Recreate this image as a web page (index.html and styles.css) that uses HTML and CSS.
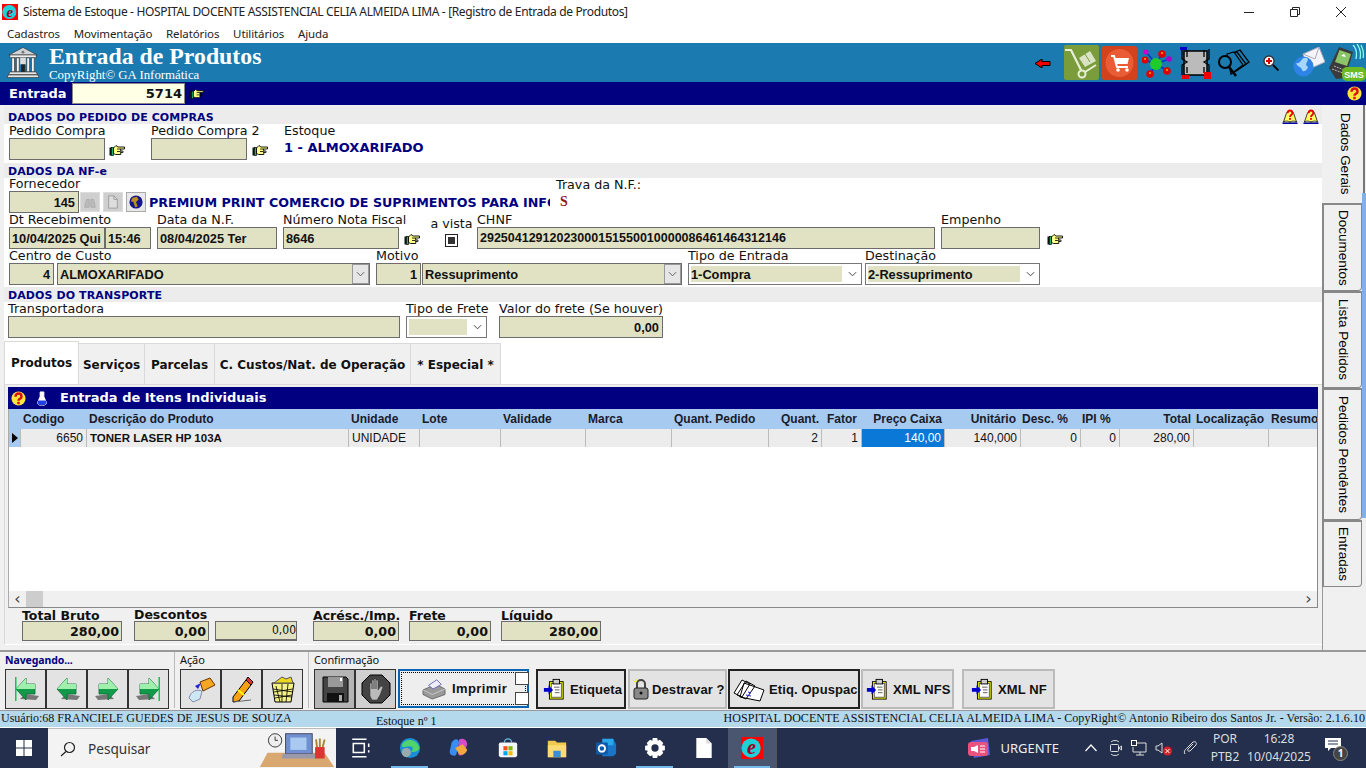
FILE: index.html
```html
<!DOCTYPE html>
<html lang="pt-BR">
<head>
<meta charset="utf-8">
<title>Sistema de Estoque</title>
<link rel="stylesheet" href="styles.css">
</head>
<body>
<svg class="defs" width="0" height="0" aria-hidden="true">
<defs>
<symbol id="hand" viewBox="0 0 16 12"><rect x=".5" y="3.500" width="2" height="8" fill="#111"/><rect x="2.500" y="3.500" width="2" height="8" fill="#19b56a" stroke="#000" stroke-width=".7"/><path d="M4.500 4L7 1.500l2 1.500h6.500v2H11l.8 1v4.500H6.500L4.500 9.500z" fill="#ffff8c" stroke="#000" stroke-width=".9"/><path d="M8 5h3M11.500 7H14v1.500h-2.500M8 7.500h3" fill="none" stroke="#000" stroke-width=".8"/></symbol>
<symbol id="help" viewBox="0 0 16 16"><circle cx="8" cy="8" r="7.500" fill="#ffe63a"/><path d="M4.800 6c0-4.500 6.400-4.500 6.400 0 0 2.300-3.200 2.300-3.200 4.300" fill="none" stroke="#d8101a" stroke-width="2.600"/><rect x="6.700" y="11.500" width="2.600" height="2.600" fill="#d8101a"/></symbol>
<symbol id="book" viewBox="0 0 16 16"><path d="M1 14L4 5c1-4 7-4 8 0l3 9z" fill="#ff6" stroke="#000" stroke-width=".8"/><path d="M1 14c3-2 5-1 7 0 2-1 4-2 7 0" fill="#fff" stroke="#000" stroke-width=".8"/><rect x="0" y="14.500" width="16" height="1.500" fill="#00a"/><path d="M5.500 4.500c0-4 5-4 5 0 0 2-2.500 2-2.500 4" fill="none" stroke="#e00" stroke-width="2"/><rect x="7" y="9.500" width="2" height="2" fill="#e00"/></symbol>
<symbol id="clip" viewBox="0 0 24 24"><rect x="7" y="4" width="15" height="19" fill="#ff0" stroke="#000"/><rect x="9" y="6" width="11" height="15" fill="#fff" stroke="#555"/><rect x="11" y="1.500" width="7" height="5" fill="#ccc" stroke="#000"/><path d="M12 10h6M13 13h5M13 16h5" stroke="#555"/><path d="M1 11h5V8l5 5-5 5v-3H1z" fill="#00c"/></symbol>
<symbol id="app" viewBox="0 0 24 24"><rect width="24" height="24" fill="#f00"/><circle cx="11" cy="12" r="10.500" fill="#1fd0d8"/><text x="11.500" y="19" text-anchor="middle" class="logo-e">e</text></symbol>
<symbol id="arrowl" viewBox="0 0 30 30"><path d="M9 25l16 1 3-4-14-2z" fill="#777"/><path d="M5 15L15 4v6h9v10h-9v6z" fill="#13994a" stroke="#086b33" stroke-width=".8"/><path d="M5 15L15 4v6h9v5z" fill="#9ff0ac"/></symbol>
</defs>
</svg>

<header class="titlebar">
  <svg class="title-icon"><use href="#app"/></svg>
  <span class="title-text">Sistema de Estoque - HOSPITAL DOCENTE ASSISTENCIAL CELIA ALMEIDA LIMA - [Registro de Entrada de Produtos]</span>
  <div class="win-btns">
    <svg class="win" viewBox="0 0 12 12"><path d="M1 6.500h10" stroke="#222"/></svg>
    <svg class="win" viewBox="0 0 12 12"><path d="M1.500 3.500h7v7h-7zM3.500 3V1.500h7v7H9" fill="none" stroke="#222"/></svg>
    <svg class="win" viewBox="0 0 12 12"><path d="M1 1l10 10M11 1L1 11" stroke="#222"/></svg>
  </div>
</header>
<nav class="menubar"><span>Cadastros</span><span>Movimentação</span><span>Relatórios</span><span>Utilitários</span><span>Ajuda</span></nav>

<section class="banner">
  <svg class="bank" viewBox="0 0 34 34"><path d="M17 1L2 9h30z" fill="#cfd3d6" stroke="#333" stroke-width=".7"/><circle cx="17" cy="6" r="1.500" fill="#777"/><rect x="3" y="9" width="28" height="3" fill="#eee" stroke="#333" stroke-width=".7"/><path d="M5 12h3v15H5zM10 12h3v15h-3zM21 12h3v15h-3zM26 12h3v15h-3z" fill="#f4f4f4" stroke="#333" stroke-width=".7"/><path d="M14 12h6v7h-6z" fill="#ddd"/><rect x="15" y="19" width="4" height="8" fill="#222"/><path d="M3 27h28l1.500 3H1.500zM1.500 30h31l1.500 3H0z" fill="#e6e6e6" stroke="#333" stroke-width=".7"/></svg>
  <div class="banner-title">
    <div class="big">Entrada de Produtos</div>
    <div class="small">CopyRight© GA Informática</div>
  </div>
  <div class="banner-tools">
    <svg class="t-arrow" viewBox="0 0 16 9"><path d="M0 4.500L7 0v2.500h8v4H7V9z" fill="#e00" stroke="#000"/></svg>
    <svg class="t-box t-green" viewBox="0 0 35 35"><rect width="35" height="35" rx="2" fill="#7a9c3a"/><path d="M1 5h6l10 20" fill="none" stroke="#e8efd8" stroke-width="2.200"/><circle cx="18" cy="29" r="3.500" fill="none" stroke="#e8efd8" stroke-width="2"/><path d="M21 27l11-7" stroke="#e8efd8" stroke-width="2"/><path d="M15 13l11-7 6 10-11 6z" fill="#d9e3c4"/><path d="M21 9l5 8" stroke="#7a9c3a"/></svg>
    <svg class="t-box t-orange" viewBox="0 0 35 34"><rect width="35" height="34" rx="2" fill="#d2431d"/><circle cx="17.500" cy="17" r="14" fill="#ea5c35"/><path d="M9 10h3l3 11h11" fill="none" stroke="#fff" stroke-width="2"/><path d="M13 12h14l-1.500 6H14.500z" fill="#fff"/><circle cx="16" cy="24" r="1.800" fill="#fff"/><circle cx="25" cy="24" r="1.800" fill="#fff"/></svg>
    <svg class="t-mol" viewBox="0 0 30 29"><path d="M4 3l10 12M20 5l-6 10M27 10l-13 5M3 11l11 4M26 22l-12-7M8 25l6-10" stroke="#03c" stroke-width="1.500"/><circle cx="14" cy="15" r="6" fill="#1fcc2c"/><circle cx="4" cy="3" r="2.500" fill="#c0c"/><circle cx="20" cy="5" r="3.800" fill="#d00"/><circle cx="3" cy="11" r="3.500" fill="#d00"/><circle cx="27" cy="10" r="2.800" fill="#a0c"/><circle cx="25" cy="22" r="3.800" fill="#d00"/><circle cx="8" cy="25" r="3.800" fill="#d00"/><path d="M19 4h2M2 10h2M24 21h2M7 24h2" stroke="#ff0"/></svg>
    <svg class="t-frame" viewBox="0 0 32 32"><rect x="5" y="4" width="23" height="24" fill="#bbb" stroke="#000" stroke-width="1.500"/><path d="M3 2v10l5 3-5 3v10M8 3v7M30 2v10l-5 3 5 3v10M25 3v7M8 20v6M25 20v6" fill="none" stroke="#000" stroke-width="1.300"/><rect x="1" y="0" width="7" height="3" fill="#00c"/><rect x="3" y="28" width="7" height="4" fill="#e00"/><rect x="25" y="25" width="7" height="7" fill="#e00"/></svg>
    <svg class="t-pages" viewBox="0 0 32 28"><path d="M15 4L22 1l9 12-13 9z" fill="none" stroke="#000" stroke-width="1.300"/><path d="M12 5l7-2 9 12-13 9z" fill="#1b7aaf" stroke="#000" stroke-width="1.300"/><path d="M9 5l7-2 9 13-12 9z" fill="#1b7aaf" stroke="#000" stroke-width="1.300"/><circle cx="7" cy="13" r="6" fill="#1b7aaf" stroke="#000" stroke-width="2"/><path d="M11 18l7 9" stroke="#000" stroke-width="2.500"/></svg>
    <svg class="t-zoom" viewBox="0 0 16 16"><circle cx="6" cy="6" r="5" fill="#fff" stroke="#333" stroke-width="1.300"/><path d="M3 6h6M6 3v6" stroke="#d00" stroke-width="2"/><path d="M10 10l5.500 5.500" stroke="#000" stroke-width="1.800"/></svg>
    <svg class="t-mail" viewBox="0 0 32 30"><path d="M10 7L26 0l6 15-18 8z" fill="#f2f4fa" stroke="#aab"/><path d="M10 7l12 5 4-12" fill="none" stroke="#aab"/><circle cx="10.500" cy="19.500" r="10" fill="#2d83e6"/><path d="M3 16c5 2 5-7 11-5 3 2-3 6 0 8 3 1-3 8-5 4-1-4-4-2-6-7z" fill="#a6d6fb"/></svg>
    <svg class="t-sms" viewBox="0 0 38 37"><path d="M1 24L11 3l14 5-8 26-9 1z" fill="#3b3b3b"/><path d="M11.500 6L23 10l-4 12-12-4z" fill="#8cc46a"/><path d="M13 12l3-2 2 3z" fill="#fff"/><path d="M4 25l11 4M6 22l10 4" stroke="#bbb" stroke-dasharray="2 1"/><path d="M25 1c3 3 4 9 3 14M29 0c3 4 4 10 3 15M33 1c2 4 3 9 2 13" fill="none" stroke="#8fe" stroke-width="1.300"/><rect x="14" y="23" width="24" height="14" rx="5" fill="#6cbb22"/><text x="26" y="33.500" text-anchor="middle" class="sms-t">SMS</text></svg>
  </div>
</section>
<section class="entry-bar">
  <span class="entry-label">Entrada</span>
  <span class="entry-box">5714</span>
  <svg class="hand"><use href="#hand"/></svg>
  <svg class="help-r"><use href="#help"/></svg>
</section>

<main class="workspace">
  <div class="form">
    <div class="sec-head sh1">DADOS DO PEDIDO DE COMPRAS
      <span class="books"><svg><use href="#book"/></svg><svg><use href="#book"/></svg></span>
    </div>
    <div class="row row-pedido">
      <div class="fld w96"><label>Pedido Compra</label><div class="inp"></div></div>
      <svg class="hand hand-f hp1"><use href="#hand"/></svg>
      <div class="fld w96 ml26"><label>Pedido Compra 2</label><div class="inp"></div></div>
      <svg class="hand hand-f hp2"><use href="#hand"/></svg>
      <div class="fld ml16"><label>Estoque</label><div class="estoque">1 - ALMOXARIFADO</div></div>
    </div>

    <div class="sec-head">DADOS DA NF-e</div>
    <div class="row row-forn">
      <div class="fld w70"><label>Fornecedor</label><div class="inp num">145</div></div>
      <div class="mini-tools">
        <span class="mini"><svg viewBox="0 0 16 14"><path d="M2 13l2-9h3v9zM9 13V4h3l2 9z" fill="#bbb" stroke="#aaa"/></svg></span>
        <span class="mini"><svg viewBox="0 0 12 16"><path d="M1 1h6l4 4v10H1z" fill="#ddd" stroke="#999"/><path d="M7 1v4h4" fill="none" stroke="#999"/></svg></span>
        <span class="mini mini-on"><svg viewBox="0 0 16 16"><circle cx="8" cy="8" r="7.500" fill="#14148c"/><path d="M4 3l5-1 2 3-3 3 2 5-3 1-2-6-3-1z" fill="#b8901a"/></svg></span>
      </div>
      <div class="supplier">PREMIUM PRINT COMERCIO DE SUPRIMENTOS PARA INFO</div>
      <div class="trava"><label>Trava da N.F.:</label><b>S</b></div>
    </div>
    <div class="row row-dates">
      <div class="fld"><label>Dt Recebimento</label><div class="pair"><div class="inp w96">10/04/2025 Qui</div><div class="inp w46">15:46</div></div></div>
      <div class="fld w120 ml6"><label>Data da N.F.</label><div class="inp">08/04/2025 Ter</div></div>
      <div class="fld w116 ml6"><label>Número Nota Fiscal</label><div class="inp">8646</div></div>
      <svg class="hand hand-f hd"><use href="#hand"/></svg>
      <div class="fld vista"><label>a vista</label><span class="check"></span></div>
      <div class="fld w458 ml4"><label>CHNF</label><div class="inp chnf">29250412912023000151550010000086461464312146</div></div>
      <div class="fld w99 ml6"><label>Empenho</label><div class="inp"></div></div>
      <svg class="hand hand-f he"><use href="#hand"/></svg>
    </div>
    <div class="row row-custo">
      <div class="fld w45"><label>Centro de Custo</label><div class="inp num">4</div></div>
      <div class="fld w313 ml3"><label>&nbsp;</label><div class="inp combo">ALMOXARIFADO<span class="drop"><svg viewBox="0 0 10 6"><path d="M1 1l4 4 4-4" fill="none" stroke="#555"/></svg></span></div></div>
      <div class="fld w45 ml6"><label>Motivo</label><div class="inp num">1</div></div>
      <div class="fld w260 ml1"><label>&nbsp;</label><div class="inp combo">Ressuprimento<span class="drop"><svg viewBox="0 0 10 6"><path d="M1 1l4 4 4-4" fill="none" stroke="#555"/></svg></span></div></div>
      <div class="fld w174 ml6"><label>Tipo de Entrada</label><div class="sel"><span>1-Compra</span><svg viewBox="0 0 10 6"><path d="M1 1l4 4 4-4" fill="none" stroke="#333"/></svg></div></div>
      <div class="fld w175 ml3"><label>Destinação</label><div class="sel"><span>2-Ressuprimento</span><svg viewBox="0 0 10 6"><path d="M1 1l4 4 4-4" fill="none" stroke="#333"/></svg></div></div>
    </div>

    <div class="sec-head">DADOS DO TRANSPORTE</div>
    <div class="row row-transp">
      <div class="fld w392"><label>Transportadora</label><div class="inp"></div></div>
      <div class="fld w81 ml6"><label>Tipo de Frete</label><div class="sel"><span></span><svg viewBox="0 0 10 6"><path d="M1 1l4 4 4-4" fill="none" stroke="#333"/></svg></div></div>
      <div class="fld w164 ml12"><label>Valor do frete (Se houver)</label><div class="inp num">0,00</div></div>
    </div>

    <div class="tabs">
      <span class="tab active">Produtos</span><span class="tab t2">Serviços</span><span class="tab t3">Parcelas</span><span class="tab t4">C. Custos/Nat. de Operação</span><span class="tab t5">* Especial *</span>
    </div>
    <div class="panel">
      <div class="grid-title">
        <svg class="gh"><use href="#help"/></svg>
        <svg class="flask" viewBox="0 0 12 16"><path d="M4 1h4v5l3 7-2 2H3l-2-2 3-7z" fill="#fff" stroke="#fff"/><path d="M2 10h8l1 3-2 2H3l-2-2z" fill="#2340e0"/></svg>
        <span>Entrada de Itens Individuais</span>
      </div>
      <div class="grid">
        <div class="g-row g-head">
          <span class="c ind"></span><span class="c c1">Codigo</span><span class="c c2">Descrição do Produto</span><span class="c c3">Unidade</span><span class="c c4">Lote</span><span class="c c5">Validade</span><span class="c c6">Marca</span><span class="c c7">Quant. Pedido</span><span class="c c8 r">Quant.</span><span class="c c9 r">Fator</span><span class="c c10 r">Preço Caixa</span><span class="c c11 r">Unitário</span><span class="c c12">Desc. %</span><span class="c c13">IPI %</span><span class="c c14 r">Total</span><span class="c c15">Localização</span><span class="c c16">Resumo</span>
        </div>
        <div class="g-row g-body">
          <span class="c ind"><i class="tri"></i></span><span class="c c1 r">6650</span><span class="c c2 b">TONER LASER HP 103A</span><span class="c c3">UNIDADE</span><span class="c c4"></span><span class="c c5"></span><span class="c c6"></span><span class="c c7"></span><span class="c c8 r">2</span><span class="c c9 r">1</span><span class="c c10 r sel-cell">140,00</span><span class="c c11 r">140,000</span><span class="c c12 r">0</span><span class="c c13 r">0</span><span class="c c14 r">280,00</span><span class="c c15"></span><span class="c c16"></span>
        </div>
        <div class="g-empty"></div>
        <div class="hscroll">
          <span class="arr">‹</span><span class="thumb"></span><span class="track"></span><span class="arr">›</span>
        </div>
      </div>
      <div class="totals">
        <div class="tot w100"><label>Total Bruto</label><div class="inp tinp">280,00</div></div>
        <div class="tot w75 ml12"><label class="up">Descontos</label><div class="inp tinp">0,00</div></div>
        <div class="tot w82 ml6"><label>&nbsp;</label><div class="inp tinp thin">0,00</div></div>
        <div class="tot w86 ml16"><label>Acrésc./Imp.</label><div class="inp tinp">0,00</div></div>
        <div class="tot w82 ml10"><label>Frete</label><div class="inp tinp">0,00</div></div>
        <div class="tot w100 ml10"><label>Líquido</label><div class="inp tinp">280,00</div></div>
      </div>
    </div>
  </div>

  <aside class="side-tabs">
    <span class="vt vt-on h98">Dados Gerais</span>
    <span class="vt h88">Documentos</span>
    <span class="vt h97">Lista Pedidos</span>
    <span class="vt h132">Pedidos Pendêntes</span>
    <span class="vt h67">Entradas</span>
    <i class="blue-strip"></i>
    <i class="top-line"></i>
  </aside>
</main>

<section class="toolbar">
  <div class="group g-nav">
    <div class="g-label navy">Navegando...</div>
    <div class="btns">
      <span class="tb"><svg viewBox="0 0 30 30"><use href="#arrowl"/><rect x="4" y="3" width="1.500" height="24" fill="#0c4"/></svg></span>
      <span class="tb"><svg viewBox="0 0 30 30"><use href="#arrowl"/></svg></span>
      <span class="tb"><svg class="flip" viewBox="0 0 30 30"><use href="#arrowl"/></svg></span>
      <span class="tb"><svg class="flip" viewBox="0 0 30 30"><use href="#arrowl"/><rect x="4" y="3" width="1.500" height="24" fill="#0c4"/></svg></span>
    </div>
  </div>
  <div class="group g-acao">
    <div class="g-label">Ação</div>
    <div class="btns">
      <span class="tb"><svg viewBox="0 0 30 30"><path d="M14 8l10-4 5 7-12 6z" fill="#f5a623" stroke="#630"/><path d="M3 24c2-7 8-9 13-7l-2 8-7 3z" fill="#cde8f5" stroke="#88a"/><path d="M9 12l6-3-3 6z" fill="#22d"/></svg></span>
      <span class="tb"><svg viewBox="0 0 30 30"><path d="M6 23L19 6l5 5-12 16-6 1z" fill="#f5a017" stroke="#000"/><path d="M19 6l2-3 5 5-2 3z" fill="#d33" stroke="#000"/><path d="M11 16l6 5" stroke="#ff0" stroke-width="2"/><path d="M6 28l18-2" stroke="#666"/></svg></span>
      <span class="tb"><svg viewBox="0 0 30 30"><path d="M4 9h22l-3 19H7z" fill="#f4f08a" stroke="#000"/><path d="M6 9l8-6 4 2 5-2 2 6z" fill="#ecd91c" stroke="#555"/><path d="M8 12l4 16M14 10v18M20 10l-2 18M5 15l20 3M6 21l18 2M25 15L6 18M24 21L7 24" stroke="#000" stroke-width=".8"/></svg></span>
    </div>
  </div>
  <div class="group g-conf">
    <div class="g-label">Confirmação</div>
    <div class="btns">
      <span class="tb dark"><svg viewBox="0 0 30 30"><path d="M3 3h23l2 2v23H3z" fill="#444" stroke="#000"/><rect x="8" y="3" width="15" height="10" fill="#999"/><rect x="20" y="4" width="2" height="3" fill="#fff"/><rect x="7" y="19" width="17" height="9" fill="#111"/><rect x="19" y="21" width="3" height="6" fill="#aaa"/></svg></span>
      <span class="tb dark2"><svg viewBox="0 0 30 30"><path d="M9 1h12l8 8v12l-8 8H9l-8-8V9z" fill="#444" stroke="#000"/><path d="M9 17V9h2v6V6h2v9V5h2v10V6h2v10l3-4 2 1-3 8-3 5h-5l-2-4z" fill="#bbb" stroke="#333" stroke-width=".5"/></svg></span>
      <span class="print-btn">
        <svg viewBox="0 0 28 24"><path d="M2 13l14-6 10 5v6l-14 5-10-5z" fill="#999" stroke="#666"/><path d="M8 8l9-6 5 5-9 5z" fill="#eef" stroke="#66a"/><path d="M2 13l10 5 14-6" fill="none" stroke="#ccc"/></svg>
        <span>Imprimir</span>
        <i class="pb-sq top"></i><i class="pb-sq bot"></i>
      </span>
      <span class="tx sel1"><svg><use href="#clip"/></svg>Etiqueta</span>
      <span class="tx flat lock"><svg viewBox="0 0 18 22"><path d="M5 10V6a4 4 0 018 0v4" fill="none" stroke="#444" stroke-width="2"/><rect x="2" y="10" width="14" height="11" rx="2" fill="#888" stroke="#222"/><circle cx="9" cy="15" r="1.500" fill="#111"/><path d="M1 2l3 3M4 1v3" stroke="#ee0"/></svg>Destravar ?</span>
      <span class="tx sel2"><svg viewBox="0 0 32 26"><path d="M1 17L9 4l8 4-8 13zM4 19l9-14 9 5-9 13zM7 21l4-14 20 7-4 11z" fill="#fff" stroke="#000"/><path d="M15 16l3 1M13 19l5 1" stroke="#22c"/></svg>Etiq. Opuspac</span>
      <span class="tx flat x1"><svg><use href="#clip"/></svg>XML NFS</span>
      <span class="tx flat x2"><svg><use href="#clip"/></svg>XML NF</span>
    </div>
  </div>
</section>

<footer class="status">
  <span class="st-user">Usuário:68 FRANCIELE GUEDES DE JESUS DE SOUZA</span>
  <span class="st-stock">Estoque nº 1</span>
  <span class="st-right">HOSPITAL DOCENTE ASSISTENCIAL CELIA ALMEIDA LIMA - CopyRight© Antonio Ribeiro dos Santos Jr. - Versão: 2.1.6.10</span>
</footer>

<footer class="taskbar">
  <svg class="tk-start" viewBox="0 0 16 16"><path d="M0 0h7.500v7.500H0zM8.500 0H16v7.500H8.500zM0 8.500h7.500V16H0zM8.500 8.500H16V16H8.500z" fill="#fff"/></svg>
  <div class="search">
    <svg viewBox="0 0 16 16"><circle cx="9.500" cy="6.500" r="5" fill="none" stroke="#222" stroke-width="1.200"/><path d="M6 10.500L1 15" stroke="#222" stroke-width="1.200"/></svg>
    <span>Pesquisar</span>
    <svg class="deco" viewBox="0 0 78 42"><path d="M0 41L8 26h60l10 15z" fill="#d9a870"/><circle cx="16" cy="13" r="7" fill="#eee" stroke="#333"/><path d="M16 9v4h3" stroke="#333" fill="none"/><rect x="27" y="6" width="28" height="21" fill="#6f8fd0" stroke="#446"/><rect x="32" y="10" width="17" height="13" fill="#a9c9f0"/><path d="M24 27h34l2 5H23z" fill="#99a"/><rect x="58" y="20" width="10" height="12" fill="#d33"/><path d="M60 20l-1-8M63 20v-9M66 20l2-8" stroke="#a83" stroke-width="2"/></svg>
  </div>
  <div class="tk-icons">
    <span class="tk"><svg viewBox="0 0 20 20"><path d="M2 2h13M2 18h13M3 6h10v8H3zM17 6v3M17 12v2" fill="none" stroke="#fff" stroke-width="1.400"/></svg></span>
    <span class="tk on"><svg viewBox="0 0 24 24"><circle cx="12" cy="12" r="11" fill="#1b8ed6"/><path d="M3 9c3-8 16-8 19 2 1 5-6 6-9 5 3-2 3-6-2-6-4 0-7 3-8-1z" fill="#4fd36a"/><circle cx="8" cy="17" r="5" fill="#9aa"/></svg></span>
    <span class="tk"><svg viewBox="0 0 24 24"><path d="M4 6c3-5 8-5 8 1l-3 12c-2 3-8 1-7-4z" fill="#3a8df0"/><path d="M12 3c4-3 9 0 9 5l-3 9c-2 5-8 4-7-1z" fill="#d84ac9"/><path d="M8 12l8-4 5 6c-2 6-8 7-10 3z" fill="#f6a83b"/></svg></span>
    <span class="tk"><svg viewBox="0 0 24 24"><path d="M8 6a4 4 0 018 0" fill="none" stroke="#6bd" stroke-width="1.500"/><rect x="2" y="6" width="20" height="16" rx="2" fill="#f2f6fa"/><rect x="7" y="10" width="4.500" height="4.500" fill="#f25022"/><rect x="12.500" y="10" width="4.500" height="4.500" fill="#7fba00"/><rect x="7" y="15.500" width="4.500" height="4.500" fill="#00a4ef"/><rect x="12.500" y="15.500" width="4.500" height="4.500" fill="#ffb900"/></svg></span>
    <span class="tk"><svg viewBox="0 0 24 24"><path d="M2 4h8l2 2h10v16H2z" fill="#f2c94c"/><path d="M2 9h20v13H2z" fill="#ffdc73"/><rect x="8" y="15" width="8" height="7" fill="#3a8dd8"/></svg></span>
    <span class="tk"><svg viewBox="0 0 24 24"><path d="M8 2h12l3 6v10l-3 3H8z" fill="#1a75c9"/><path d="M8 2h12v7H8z" fill="#2aa6ea"/><rect x="1" y="6" width="13" height="13" rx="1" fill="#0f5aa8"/><circle cx="7.500" cy="12.500" r="3.500" fill="none" stroke="#fff" stroke-width="2"/></svg></span>
    <span class="tk on"><svg viewBox="0 0 20 20"><path d="M8 1h4l.5 2.500 2-1 3 3-1 2 2.500.5v4l-2.500.5 1 2-3 3-2-1-.5 2.500H8l-.5-2.500-2 1-3-3 1-2L1 12V8l2.500-.5-1-2 3-3 2 1z" fill="#fff"/><circle cx="10" cy="10" r="3.300" fill="#242f4d"/></svg></span>
    <span class="tk"><svg viewBox="0 0 16 20"><path d="M1 1h9l5 5v13H1z" fill="#fff"/><path d="M10 1v5h5" fill="#ddd"/></svg></span>
    <span class="tk active-app"><svg><use href="#app"/></svg></span>
  </div>
  <div class="tk-tray">
    <svg class="tr-urg" viewBox="0 0 24 24"><path d="M3 5l17-3 2 17-16 3z" fill="#5f58d8"/><rect x="0" y="6" width="20" height="14" rx="3" fill="#e8527e"/><path d="M3 11h3l4-2v8l-4-2H3z" fill="#fff"/><path d="M12 10h5M12 13h5M12 16h5" stroke="#fff"/></svg>
    <span class="urg">URGENTE</span>
    <svg class="tr tr1" viewBox="0 0 12 16"><path d="M.5 11l5.500-6 5.500 6" fill="none" stroke="#fff" stroke-width="1.200"/></svg>
    <svg class="tr tr2" viewBox="0 0 12 16"><path d="M1 2c2-2 6-2 8 0M1 14c2 2 6 2 8 0" fill="none" stroke="#ddd"/><rect x=".5" y="4.500" width="8" height="7" rx="1" fill="none" stroke="#ddd"/><path d="M9 8l2.500-2v4z" fill="none" stroke="#ddd"/></svg>
    <svg class="tr tr3" viewBox="0 0 16 16"><path d="M4 3h11v9H2V7" fill="none" stroke="#ddd"/><rect x=".5" y=".5" width="5" height="5" fill="#242f4d" stroke="#fff"/><path d="M9 12v3M5 15h8" stroke="#ddd"/></svg>
    <svg class="tr tr4" viewBox="0 0 17 16"><path d="M1 6h2l4-3v10l-4-3H1z" fill="none" stroke="#ddd"/><circle cx="12.500" cy="11" r="4.500" fill="#d8202a"/><path d="M10.500 9l4 4M14.500 9l-4 4" stroke="#fff"/></svg>
    <svg class="tr tr5" viewBox="0 0 16 16"><path d="M2 14c-2-3 1-5 3-7l5-5c3-1 4 1 3 3l-6 6c-2 1-3-1-2-2l5-5" fill="none" stroke="#ddd"/></svg>
    <div class="lang"><span>POR</span><span>PTB2</span></div>
    <div class="clock"><span>16:28</span><span>10/04/2025</span></div>
    <span class="notif"><svg viewBox="0 0 16 14"><path d="M0 0h16v10H6l-3 3v-3H0z" fill="#fff"/><path d="M3 3h10M3 6h10" stroke="#242f4d"/></svg><b>1</b></span>
  </div>
</footer>
</body>
</html>
```

FILE: styles.css
```css
*{box-sizing:border-box}
html,body{margin:0;padding:0}
body{width:1366px;height:768px;overflow:hidden;background:#f0f0f0;font-family:"DejaVu Sans",sans-serif;color:#111;display:flex;flex-direction:column}
.defs{position:absolute}
.logo-e{font:italic bold 22px "Liberation Serif",serif;fill:#a00028}
.sms-t{font:bold 9px "Liberation Sans",sans-serif;fill:#fff}

.titlebar{height:23px;background:#fff;display:flex;align-items:center;padding-left:2px;color:#222}
.title-icon{width:16px;height:16px;margin-right:5px}
.title-text{font:12px "Noto Sans",sans-serif;letter-spacing:-.34px}
.win-btns{margin-left:auto;display:flex;gap:34px;padding-right:19px}
.win{width:12px;height:12px}
.menubar{height:20px;background:#fff;display:flex;gap:13.700px;padding-left:7px;font:11.500px "Noto Sans",sans-serif;letter-spacing:-.1px;align-items:center;color:#222}

.banner{height:39px;background:#1b7aaf;display:flex;color:#fff}
.bank{width:32px;height:33px;margin:3px 0 0 7px}
.banner-title{margin-left:10px}
.big{font:bold 23.800px/26px "Liberation Serif",serif}
.small{font:12.850px/13px "Liberation Serif",serif}
.banner-tools{margin-left:auto;position:relative;width:333px}
.banner-tools svg{position:absolute}
.t-arrow{left:2px;top:16px;width:16px;height:9px}
.t-box{width:35px;height:35px;top:2px}
.t-green{left:31px}.t-orange{left:69px;top:3px;height:34px}
.t-mol{left:109px;top:6px;width:30px;height:29px}
.t-frame{left:146px;top:4px;width:32px;height:32px}
.t-pages{left:185px;top:6px;width:32px;height:28px}
.t-zoom{left:230px;top:12px;width:16px;height:16px}
.t-mail{left:260px;top:4px;width:32px;height:30px}
.t-sms{left:295px;top:1px;width:38px;height:37px}

.entry-bar{height:23px;background:#000080;display:flex;align-items:center;padding-left:9px}
.entry-label{font:bold 13px "DejaVu Sans",sans-serif;color:#fff;width:63px}
.entry-box{width:113px;height:21px;background:#ffffe5;border:1px solid #888;font:bold 13px/19px "DejaVu Sans",sans-serif;text-align:right;padding-right:2px}
.hand{width:15px;height:11px;margin-left:4px}
.help-r{width:15px;height:15px;margin-left:auto;margin-right:4px}

.workspace{height:545px;display:flex;background:#f0f0f0}
.form{width:1322px;border-left:4px solid #f0f0f0;padding-top:1px}
.sec-head{height:15px;background:#ececec;font:bold 11px/12px "DejaVu Sans",sans-serif;letter-spacing:.1px;color:#000080;padding-left:4px;position:relative;display:flex;align-items:flex-end}
.sh1{height:18px}
.books{position:absolute;right:3px;top:3px;display:flex;gap:5px}
.books svg{width:16px;height:15px}
.row{display:flex;background:#fff;padding-left:5px;align-items:flex-start}
.row-pedido{height:39px}
.row-forn{height:34px;position:relative}
.row-forn>.fld{margin-top:-1px}
.row-dates{height:37px}
.row-dates label{margin-top:1px}
.row-custo{height:38px}
.row-transp{height:40px;padding-left:4px}
.fld{display:flex;flex-direction:column}
.fld label{font:12.700px/14px "DejaVu Sans",sans-serif;white-space:nowrap;color:#111}
.inp{background:#e1e1c3;border:1px solid #6c6c6c;height:22px;font:bold 12.800px/21px "Liberation Sans",sans-serif;padding-left:2px;white-space:nowrap;overflow:hidden}
.num{text-align:right;padding:0 3px 0 0}
.w96{width:96px}.w46{width:46px}.w45{width:45px}
.ml1{margin-left:1px}.ml3{margin-left:3px}.ml4{margin-left:4px}.ml6{margin-left:6px}.ml10{margin-left:10px}.ml12{margin-left:12px}.ml16{margin-left:16px}.ml26{margin-left:26px}
.w70{width:70px}
.hand-f{margin:20px 0 0 4px;width:16px;height:12px;flex:none}
.hp2{margin-left:5px}
.hd{margin:21px 0 0 5px}
.he{margin:21px 0 0 7px}
.estoque{font:bold 13px/22px "DejaVu Sans",sans-serif;color:#000080;margin-top:-1px}
.mini-tools{display:flex;gap:3px;margin:14px 0 0 1px}
.mini{width:20px;height:20px;background:#cfcfcf;display:flex;align-items:center;justify-content:center;border:1px solid #ddd}
.mini svg{width:14px;height:14px}
.mini-on{background:#e8e8e8;border-color:#aaa}
.supplier{font:bold 12.700px/20px "DejaVu Sans",sans-serif;color:#000080;margin:15px 0 0 3px;width:401px;overflow:hidden;white-space:nowrap}
.trava{position:absolute;left:552px;top:0;width:100px}
.trava label{font:12.700px/13px "DejaVu Sans",sans-serif;display:block}
.trava b{font:bold 14px/20px "Liberation Serif",serif;color:#8b1a1a;display:block;margin:1px 0 0 4px}
.pair{display:flex}
.w120{width:120px}
.w116{width:116px}
.vista{width:43px;margin-left:10px;align-items:center;padding-top:4px}
.check{width:13px;height:13px;border:1px solid #222;background:#fff;margin-top:3px;display:flex;align-items:center;justify-content:center}
.check::after{content:"";width:7px;height:7px;background:#333}
.w458{width:458px}
.chnf{font-size:12.500px}
.w99{width:99px}
.w313{width:313px}
.w260{width:260px}
.w174{width:174px}
.w175{width:175px}
.combo{position:relative}
.drop{position:absolute;right:0;top:0;bottom:0;width:17px;background:#e6e6e6;border:1px solid #999;display:flex;align-items:center;justify-content:center}
.drop svg{width:9px;height:6px}
.sel{height:22px;border:1px solid #777;background:#fff;display:flex;align-items:stretch;padding:2px;font:bold 12.800px/17px "Liberation Sans",sans-serif}
.sel span{flex:1;background:#e1e1c3}
.sel svg{width:9px;height:6px;align-self:center;margin:0 2px 0 6px}
.w392{width:392px}
.w81{width:81px}
.w82{width:82px}
.w164{width:164px}

.tabs{height:43px;display:flex;align-items:flex-end;background:#fff;border-bottom:1px solid #d9d9d9}
.tab{height:41px;background:#f0f0f0;border:1px solid #d9d9d9;border-bottom:0;margin-left:-1px;font:bold 12px/42px "DejaVu Sans",sans-serif;color:#111;text-align:center;white-space:nowrap}
.active{height:43px;width:75px;background:#fff;line-height:43px;margin-left:0}
.t2{width:67px}.t3{width:71px}.t4{width:197px}.t5{width:91px}
.panel{background:#f0f0f0;height:260px;border-left:1px solid #d9d9d9;border-bottom:1px solid #fff;padding:2px 0 0 3px}
.grid-title{height:22px;background:#000080;color:#fff;font:bold 13px/22px "DejaVu Sans",sans-serif;display:flex;align-items:center;width:1310px}
.gh{width:15px;height:15px;margin-left:3px}
.flask{width:12px;height:15px;margin-left:10px}
.grid-title span{margin-left:12px}
.grid{width:1310px;height:199px;background:#fff;border:1px solid #888;border-top:0;border-left:1px solid #aaa;display:flex;flex-direction:column;overflow:hidden}
.g-row{display:flex;flex:none;font:12px/18px "Liberation Sans",sans-serif;white-space:nowrap}
.g-head{background:#a6caf0;height:20px;line-height:21px;font-weight:bold;color:#1a1a2a}
.g-body{background:#ececec;height:18px;line-height:19px}
.c{display:block;flex:none;overflow:hidden;padding:0 3px;border-right:1px solid #bbb}
.g-head .c{border:0;padding-left:2px}
.ind{width:12px;padding:0;background:#a6caf0;position:relative}
.tri{position:absolute;left:3px;top:4px;border-left:6px solid #000;border-top:5px solid transparent;border-bottom:5px solid transparent}
.c1{width:66px}.c2{width:262px}.c3{width:71px}.c4{width:81px}.c5{width:85px}.c6{width:86px}.c7{width:97px}.c8{width:53px}.c9{width:40px}.c10{width:83px}.c11{width:76px}.c12{width:60px}.c13{width:39px}.c14{width:74px}.c15{width:75px}.c16{width:62px}
.g-head .c12,.g-head .c13{padding-left:1px}
.g-head .c9,.g-head .c11{padding-right:5px}
.r{text-align:right}
.b{font-weight:bold;font-size:11.500px}
.sel-cell{background:#0a78d7;color:#fff}
.g-empty{flex:1}
.hscroll{height:16px;background:#f0f0f0;display:flex;align-items:center;flex:none;font:16px/14px "DejaVu Sans",sans-serif;color:#444}
.arr{width:17px;text-align:center;flex:none}
.thumb{width:17px;height:16px;background:#cdcdcd;flex:none}
.track{flex:1}
.totals{display:flex;padding-left:14px;height:36px;align-items:flex-start;margin-top:-1px}
.tot{display:flex;flex-direction:column}
.tot label{font:bold 12.500px/13px "DejaVu Sans",sans-serif;height:12px;white-space:nowrap;margin-top:2px}
.tot label.up{margin-top:1px;height:13px}
.tinp{height:20px;font:bold 12.700px/20px "DejaVu Sans",sans-serif;text-align:right;padding:0 2px 0 0}
.thin{font:12px/16px "DejaVu Sans Condensed","DejaVu Sans",sans-serif;font-stretch:condensed;border-width:1px 1px 2px 1px;padding-right:0}
.w100{width:100px}.w75{width:75px}.w86{width:86px}

.side-tabs{width:44px;display:flex;flex-direction:column;background:#f0f0f0;position:relative}
.side-tabs::after{content:"";flex:1;border-left:1px solid #999}
.vt{writing-mode:vertical-rl;flex:none;width:40px;background:#f0f0f0;font:13.500px/18px "Liberation Sans",sans-serif;color:#000;display:flex;align-items:center;justify-content:center;border:1px solid #888;border-left:2px solid #888;border-top:2px solid #888;border-radius:0 0 4px 0;white-space:nowrap}
.vt-on{border:0;letter-spacing:-.1px;padding-left:6px}
.h98{height:98px}.h88{height:88px}.h97{height:97px}.h132{height:132px}.h67{height:67px}
.blue-strip{position:absolute;left:40px;top:88px;width:4px;height:325px;background:#7fb0e8}
.top-line{position:absolute;left:41px;top:0;width:2px;height:88px;background:#777}

.toolbar{height:60px;display:flex;background:#f0f0f0;border-top:2px solid #999}
.group{padding-left:5px;border-right:1px solid #bbb;flex:none;height:56px}
.g-nav{width:175px}
.g-acao{width:134px}
.g-conf{flex:1;border:0}
.g-label{font:11px/14px "Noto Sans",sans-serif;letter-spacing:-.1px;margin:1px 0 2px;height:14px}
.navy{color:#000080;font-weight:bold;font-size:10.500px}
.btns{display:flex;align-items:flex-start;position:relative}
.tb{width:41px;height:40px;background:#e3e3e3;border:1px solid #333;display:flex;align-items:center;justify-content:center;flex:none}
.tb svg{width:30px;height:30px}
.flip{transform:scaleX(-1)}
.dark{background:#b5b5b5}.dark2{background:#d0d0d0}
.print-btn{width:131px;height:39px;margin-left:2px;border:2px solid #0a64b4;outline:1px dotted #000;outline-offset:-4px;background:#eee;display:flex;align-items:center;position:relative;padding-left:21px;font:bold 13px "Liberation Sans",sans-serif;letter-spacing:.4px;gap:5px;flex:none}
.print-btn svg{width:26px;height:22px}
.pb-sq{position:absolute;right:-2px;width:14px;height:13px;background:#fff;border:1px solid #444}
.top{top:1px}.bot{bottom:1px}
.tx{height:40px;margin-left:7px;display:flex;align-items:center;background:#e3e3e3;border:2px solid #222;font:bold 13px "Liberation Sans",sans-serif;letter-spacing:.1px;flex:none;white-space:nowrap;gap:5px;padding-left:5px}
.tx svg{width:22px;height:22px;flex:none}
.sel1{width:90px}
.flat{border:2px solid #bbb}
.lock{width:99px;margin-left:2px;padding-left:2px;gap:2px}
.lock svg{width:18px}
.sel2{width:132px;margin-left:1px;padding-left:3px;gap:4px}
.sel2 svg{width:32px;height:26px}
.x1{width:93px;margin-left:1px;padding-left:3px}
.x2{width:93px;margin-left:8px;padding-left:7px}

.status{height:18px;background:#b4d8ec;border-top:1px solid #999;border-bottom:1px solid #fff;display:flex;font:12px/15px "Liberation Serif",serif;position:relative;padding:0 1px}
.st-stock{position:absolute;left:376px;top:3px}
.st-right{margin-left:auto;white-space:nowrap;letter-spacing:.03px}

.taskbar{height:40px;background:#242f4d;display:flex;align-items:center;color:#fff;font:12px "Noto Sans",sans-serif;flex:none}
.tk-start{width:16px;height:16px;margin:0 16px;flex:none}
.search{width:288px;height:40px;background:#f3f3f3;color:#333;display:flex;align-items:center;position:relative;font:13.600px "Noto Sans",sans-serif;flex:none;border-top:1px solid #bbb}
.search svg{width:16px;height:16px;margin-left:12px}
.search span{margin-left:12px}
.search .deco{position:absolute;right:0;bottom:0;width:78px;height:40px;margin:0}
.tk-icons{display:flex;height:40px;flex:none}
.tk{width:49px;height:40px;display:flex;align-items:center;justify-content:center;position:relative}
.tk svg{width:22px;height:22px}
.tk.on::after,.active-app::after{content:"";position:absolute;left:6px;right:6px;bottom:0;height:2px;background:#76b9ed}
.active-app{background:#4a5570;border-right:1px solid #555}
.tk-tray{margin-left:auto;display:flex;align-items:center;height:40px;padding-right:17px}
.tr-urg{width:24px;height:24px;margin-right:8px}
.urg{font:13px "Noto Sans",sans-serif;margin-right:26px;color:#eee}
.tr{height:16px;flex:none}
.tr1{width:12px;margin-right:13px}
.tr2{width:12px;margin-right:9px}
.tr3{width:16px;margin-right:8px}
.tr4{width:17px;margin-right:11px}
.tr5{width:16px;margin-right:11px}
.lang{display:flex;flex-direction:column;align-items:center;line-height:18px;width:30px;color:#ddd}
.clock{display:flex;flex-direction:column;align-items:center;line-height:18px;width:68px;margin-left:5px;color:#ddd}
.notif{width:24px;height:24px;position:relative;margin-left:12px}
.notif svg{width:16px;height:14px;display:block;margin-top:2px}
.notif b{position:absolute;left:8px;top:10px;width:15px;height:15px;border-radius:50%;background:#444;border:1px solid #888;font:bold 10px/13px "Noto Sans",sans-serif;text-align:center}
```
